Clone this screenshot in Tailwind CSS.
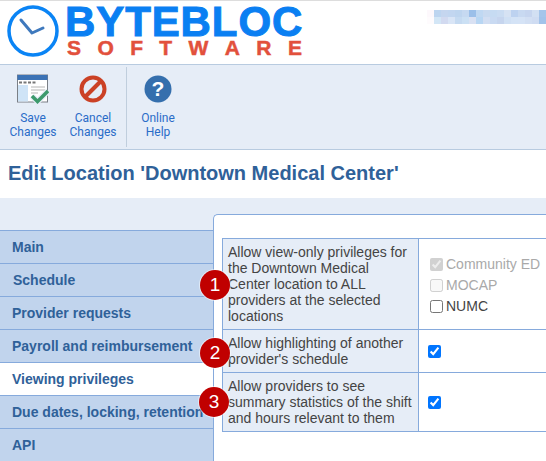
<!DOCTYPE html>
<html lang="en">
 <head>
  <meta charset="utf-8"/>
  <meta content="width=device-width, initial-scale=1.0" name="viewport"/>
  <title>Edit Location</title>
  <script src="https://cdn.jsdelivr.net/npm/@tailwindcss/browser@4"></script>
 </head>
 <body class="bg-white font-['Liberation_Sans',Arial,sans-serif]">
  <div class="w-[546px] h-[461px] overflow-hidden flex flex-col">
   <!-- Header -->
   <div class="h-[64px] shrink-0 border-t border-t-[#dddddd] flex justify-between">
    <div class="flex pl-[7px] pt-[3px]">
     <svg class="w-[52px] h-[54px]" viewBox="0 0 52 54">
      <circle cx="26" cy="27" r="24" fill="none" stroke="#0a84f5" stroke-width="3.5"/>
      <path d="M14 16 L25 29 L36 24" fill="none" stroke="#3f79bd" stroke-width="3" stroke-linecap="round" stroke-linejoin="round"/>
     </svg>
     <div class="ml-[6px] w-[240px]">
      <div class="text-[42px] leading-[35px] font-bold text-[#0a7ff2] tracking-[0.9px] [-webkit-text-stroke:1px_#0a7ff2] whitespace-nowrap">BYTEBLOC</div>
      <div class="text-[21px] leading-[18px] font-bold text-[#e2503c] [-webkit-text-stroke:0.5px_#e2503c] flex justify-between pl-[2px] pr-[3px]">
       <span>S</span><span>O</span><span>F</span><span>T</span><span>W</span><span>A</span><span>R</span><span>E</span>
      </div>
     </div>
    </div>
    <!-- blurred user name -->
    <div class="mt-[9px] h-[14px] w-[119px] grid grid-cols-17 shrink-0">
     <div class="bg-[#fdf8fc]"></div><div class="bg-[#bdd5f0]"></div><div class="bg-[#c5d6ef]"></div><div class="bg-[#c2d6f0]"></div><div class="bg-[#bed5ef]"></div><div class="bg-[#c6d9f1]"></div><div class="bg-[#9bbfe9]"></div><div class="bg-[#c0d8f2]"></div><div class="bg-[#c9daf0]"></div><div class="bg-[#c6dbf2]"></div><div class="bg-[#cadcf2]"></div><div class="bg-[#d6e2f3]"></div><div class="bg-[#bdd2f0]"></div><div class="bg-[#c8d9f1]"></div><div class="bg-[#c6d5ef]"></div><div class="bg-[#d2e0f3]"></div><div class="bg-[#a5c5ea]"></div>
     <div class="bg-[#fefbfd]"></div><div class="bg-[#d3e6f6]"></div><div class="bg-[#d2daf0]"></div><div class="bg-[#d9e5f6]"></div><div class="bg-[#c5daf1]"></div><div class="bg-[#cbe0f4]"></div><div class="bg-[#d9e1f3]"></div><div class="bg-[#b8d6f3]"></div><div class="bg-[#d2def2]"></div><div class="bg-[#c9daf2]"></div><div class="bg-[#c6d5ee]"></div><div class="bg-[#d0e0f4]"></div><div class="bg-[#d4e3f6]"></div><div class="bg-[#d5e3f6]"></div><div class="bg-[#d2dff3]"></div><div class="bg-[#cfdcf2]"></div><div class="bg-[#a2c3ea]"></div>
    </div>
   </div>

   <!-- Toolbar -->
   <div class="h-[86px] shrink-0 bg-[#e6edf7] border-y border-[#b8cbe0] flex text-[12px] leading-[14px] text-[#2a6cc8] text-center font-['Roboto',sans-serif]">
    <div class="w-[66px] pt-[9px]">
     <svg class="mx-auto w-[32px] h-[30px]" viewBox="0 0 32 30">
      <rect x="0.500" y="1" width="30" height="27" fill="#fff" stroke="#7a7f86"/>
      <rect x="0.500" y="1" width="30" height="5" fill="#3b72b5"/>
      <rect x="1" y="11" width="10" height="16.500" fill="#cfe4f7"/>
      <path d="M2 8.500h3M6.500 8.500h3M11 8.500h3M15.500 8.500h3" stroke="#777" stroke-width="2"/>
      <path d="M14 13h14M14 16h14M14 19h7" stroke="#b5b5b5"/>
      <path d="M15 22l5.500 5.500L31 17" fill="none" stroke="#e6edf7" stroke-width="6"/>
      <path d="M15 22l5.500 5.500L31 17" fill="none" stroke="#3d9a6c" stroke-width="3.500"/>
     </svg>
     <div class="mt-[7px]">Save<br/>Changes</div>
    </div>
    <div class="w-[54px] mr-[6px] pt-[9px]">
     <svg class="mx-auto w-[28px] h-[30px]" viewBox="0 0 28 30">
      <circle cx="14" cy="15" r="11.500" fill="none" stroke="#cb4125" stroke-width="4"/>
      <path d="M6 23L22 7" stroke="#cb4125" stroke-width="4"/>
     </svg>
     <div class="mt-[7px]">Cancel<br/>Changes</div>
    </div>
    <div class="w-px h-[80px] mt-[2px] bg-[#c0cedd]"></div>
    <div class="w-[62px] pt-[9px]">
     <svg class="mx-auto w-[28px] h-[30px]" viewBox="0 0 28 30">
      <circle cx="14" cy="15" r="13.500" fill="#356fad"/>
      <text x="14" y="22" text-anchor="middle" font-family="Liberation Sans" font-weight="700" font-size="21" fill="#fff">?</text>
     </svg>
     <div class="mt-[7px]">Online<br/>Help</div>
    </div>
   </div>

   <!-- Title -->
   <div class="h-[48px] shrink-0 pl-[8px] pt-[11px]">
    <h1 class="text-[20px] leading-[24px] font-bold text-[#2f6199] whitespace-nowrap">Edit Location 'Downtown Medical Center'</h1>
   </div>

   <!-- Tabs + content -->
   <div class="flex-1 bg-[#e6edf7] flex items-start">
    <div class="w-[213px] shrink-0 mt-[32px] border-t border-[#86aadc] text-[14px] leading-[32px] font-bold text-[#2f6199]">
     <div class="h-[33px] pl-[12px] bg-[#c1d4ed] border-b border-[#86aadc]">Main</div>
     <div class="h-[33px] pl-[13px] bg-[#c1d4ed] border-b border-[#86aadc]">Schedule</div>
     <div class="h-[33px] pl-[12px] bg-[#c1d4ed] border-b border-[#86aadc]">Provider requests</div>
     <div class="h-[33px] pl-[12px] bg-[#c1d4ed] border-b border-[#86aadc]">Payroll and reimbursement</div>
     <div class="h-[33px] pl-[12px] bg-white border-b border-[#86aadc]">Viewing privileges</div>
     <div class="h-[33px] pl-[12px] bg-[#c1d4ed] border-b border-[#86aadc] whitespace-nowrap">Due dates, locking, retention</div>
     <div class="h-[33px] pl-[12px] bg-[#c1d4ed] border-b border-[#86aadc]">API</div>
    </div>
    <div class="relative flex-1 min-w-0 h-[300px] mt-[16px] bg-white border-l border-t border-[#86aadc] rounded-tl-[5px] pl-[8px] pt-[23px]">
     <table class="w-[340px] border-collapse text-[14px] leading-[16px] text-[#444444]">
      <tbody>
       <tr class="h-[91px]">
        <td class="w-[196px] bg-[#e6edf7] border border-[#86aadc] pl-[5px] pr-[4px]">Allow view-only privileges for the Downtown Medical Center location to ALL providers at the selected locations</td>
        <td class="border border-[#86aadc] pl-[11px] pt-[2px]">
         <label class="flex items-center gap-[3px] h-[21px] text-[#a9a9a9]"><input type="checkbox" checked disabled/>Community ED</label>
         <label class="flex items-center gap-[3px] h-[21px] text-[#a9a9a9]"><input type="checkbox" disabled/>MOCAP</label>
         <label class="flex items-center gap-[3px] h-[21px]"><input type="checkbox"/>NUMC</label>
        </td>
       </tr>
       <tr class="h-[43px]">
        <td class="bg-[#e6edf7] border border-[#86aadc] pl-[5px] pr-[4px]">Allow highlighting of another provider's schedule</td>
        <td class="border border-[#86aadc] pl-[9px]"><input class="block" type="checkbox" checked/></td>
       </tr>
       <tr class="h-[59px]">
        <td class="bg-[#e6edf7] border border-[#86aadc] pl-[5px] pr-[4px]">Allow providers to see summary statistics of the shift and hours relevant to them</td>
        <td class="border border-[#86aadc] pl-[9px]"><input class="block" type="checkbox" checked/></td>
       </tr>
      </tbody>
     </table>
     <!-- Callout numbers -->
     <div class="absolute left-[-14px] top-[55px] w-[30px] h-[30px] rounded-full bg-[#c00000] ring-1 ring-white/50 text-white text-[19px] leading-[30px] text-center">1</div>
     <div class="absolute left-[-14px] top-[123px] w-[30px] h-[30px] rounded-full bg-[#c00000] ring-1 ring-white/50 text-white text-[19px] leading-[30px] text-center">2</div>
     <div class="absolute left-[-15px] top-[172px] w-[30px] h-[30px] rounded-full bg-[#c00000] ring-1 ring-white/50 text-white text-[19px] leading-[30px] text-center">3</div>
    </div>
   </div>
  </div>
 </body>
</html>
